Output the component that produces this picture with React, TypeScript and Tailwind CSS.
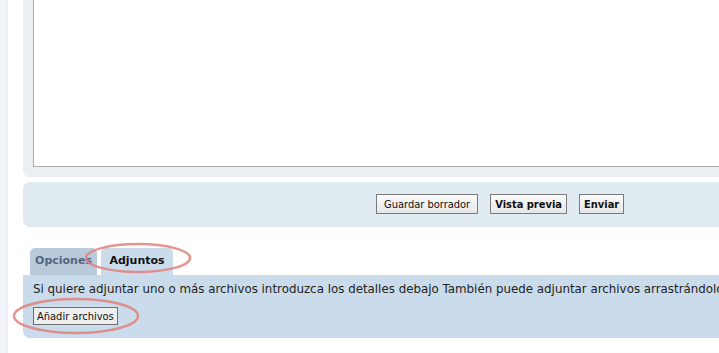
import React from 'react';

const font = { fontFamily: '"DejaVu Sans", Verdana, sans-serif' };
const btnFont = { fontFamily: '"DejaVu Sans Condensed", "DejaVu Sans", sans-serif' };

const Btn: React.FC<{ label: string; bold?: boolean; wide?: boolean }> = ({ label, bold, wide }) => (
  <button
    type="button"
    style={btnFont}
    className={`h-[20px] ${wide ? 'px-[7px]' : 'px-[4px]'} border border-[#7a7a7a] bg-gradient-to-b from-[#fbfbfb] to-[#e6e6e6] text-[11px] leading-none text-[#111] ${bold ? 'font-bold' : ''}`}
  >
    {label}
  </button>
);

const App: React.FC = () => {
  return (
    <div className="relative flex h-[353px] w-[719px] overflow-hidden bg-white text-[#333]" style={font}>
      <div className="w-[8px] shrink-0 bg-[#f3f4f9] border-r border-[#eceef4]" />
      <div className="ml-[15px] w-[760px] shrink-0 flex flex-col">
        <div className="h-[177px] bg-[#ebeff2] rounded-b-[7px] px-[10px] pb-[10px]">
          <div className="h-full bg-white border-l border-b border-[#a9acae]" />
        </div>

        <div className="mt-[5px] h-[45px] bg-[#e1ebf2] rounded-[7px] pl-[353px] pt-[12px] flex gap-[12px] items-start">
          <Btn label="Guardar borrador" wide />
          <Btn label="Vista previa" bold />
          <Btn label="Enviar" bold />
        </div>

        <div className="mt-[21px] flex items-end gap-[4px] pl-[7px] h-[27px]">
          <div className="h-[27px] w-[67px] rounded-t-[5px] bg-[#b9cbda] flex items-center justify-center text-[11px] font-bold text-[#536482]">
            Opciones
          </div>
          <div className="h-[27px] w-[72px] rounded-t-[5px] bg-[#cadceb] flex items-center justify-center text-[11px] font-bold text-[#111]">
            Adjuntos
          </div>
        </div>

        <div className="h-[63px] bg-[#cadceb] rounded-[7px] rounded-tl-none px-[10px] pt-[6px]">
          <p className="text-[11.85px] leading-[16px] whitespace-nowrap text-[#222]">
            Si quiere adjuntar uno o más archivos introduzca los detalles debajo También puede adjuntar archivos arrastrándolo
          </p>
          <button
            type="button"
            style={btnFont}
            className="mt-[10px] h-[18px] px-[3px] border border-[#6f6f6f] bg-[#eeeeee] text-[11px] leading-none text-[#111]"
          >
            Añadir archivos
          </button>
        </div>
      </div>

      <svg className="absolute left-0 top-0 pointer-events-none" width="719" height="353">
        <ellipse cx="138" cy="258" rx="52" ry="14" fill="none" stroke="#e0817c" strokeOpacity="0.85" strokeWidth="2.5" />
        <ellipse cx="76" cy="316" rx="62" ry="17" fill="none" stroke="#e0817c" strokeOpacity="0.85" strokeWidth="2.5" />
      </svg>
    </div>
  );
};

export default App;
